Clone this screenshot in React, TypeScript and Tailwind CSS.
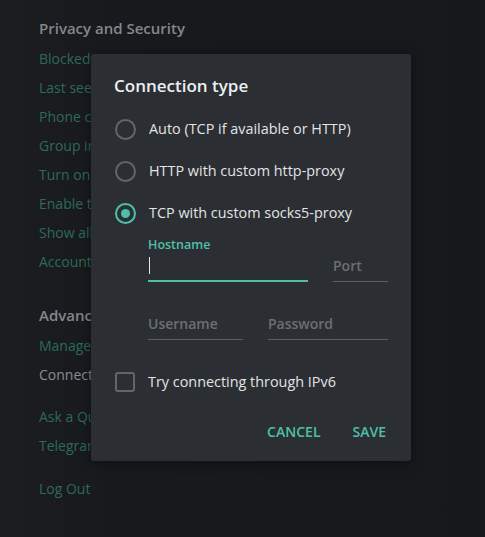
import React from 'react';

const privacyItems = [
  'Blocked users',
  'Last seen & online',
  'Phone calls',
  'Group invite settings',
  'Turn on local passcode',
  'Enable two-step verification',
  'Show all sessions',
  'Account self-destruct settings',
];

const Radio: React.FC<{ checked?: boolean; label: string }> = ({ checked, label }) => (
  <div className="flex h-[42px] items-center">
    <div className="flex w-[34px] shrink-0">
      <span
        className={`flex h-[21px] w-[21px] items-center justify-center rounded-full border-2 ${
          checked ? 'border-[#4fc0a8]' : 'border-[#62656a]'
        }`}
      >
        {checked && <span className="h-[9px] w-[9px] rounded-full bg-[#4fc0a8]" />}
      </span>
    </div>
    <span className="text-[14.4px] text-[#e2e4e6]">{label}</span>
  </div>
);

const Field: React.FC<{ placeholder: string; width: string }> = ({ placeholder, width }) => (
  <div className={`${width} border-b border-[#5b5e63] pb-[5px] text-[14px] font-semibold text-[#6c6f74]`}>
    {placeholder}
  </div>
);

export default function App() {
  return (
    <div
      className="relative h-[537px] w-[485px] overflow-hidden bg-[linear-gradient(90deg,#1b1d21_0%,#17191d_25%,#16181c_100%)]"
      style={{ fontFamily: '"Open Sans", "Liberation Sans", sans-serif' }}
    >
      {/* settings page behind the overlay */}
      <div className="pl-[39px] pt-[17px]">
        <div className="text-[15px] font-semibold leading-[22px] text-[#84878b]">Privacy and Security</div>
        <div className="mt-[5px]">
          {privacyItems.map((item) => (
            <div key={item} className="text-[14px] leading-[29px] text-[#2d6a59]">
              {item}
            </div>
          ))}
        </div>
        <div className="mt-[28px] text-[15px] font-semibold leading-[22px] text-[#84878b]">Advanced</div>
        <div className="mt-[5px] text-[14px] leading-[29px] text-[#2d6a59]">Manage local storage</div>
        <div className="text-[14px] leading-[29px] text-[#8a8c90]">Connection type</div>
        <div className="mt-[13px] text-[14px] leading-[29px] text-[#2d6a59]">Ask a Question</div>
        <div className="text-[14px] leading-[29px] text-[#2d6a59]">Telegram FAQ</div>
        <div className="mt-[14px] text-[14px] leading-[29px] text-[#2d6a59]">Log Out</div>
      </div>

      {/* dialog */}
      <div className="absolute left-[91px] top-[54px] flex h-[407px] w-[320px] flex-col rounded-[3px] bg-[#2b2e33] px-[23px] pt-5 shadow-[0_2px_12px_rgba(0,0,0,0.45)]">
        <div className="text-[17px] font-semibold leading-6 text-[#eceef0]">Connection type</div>
        <div className="mt-[10px] pl-px">
          <Radio label="Auto (TCP if available or HTTP)" />
          <Radio label="HTTP with custom http-proxy" />
          <Radio checked label="TCP with custom socks5-proxy" />
        </div>

        <div className="mt-[3px] pl-[34px]">
          <div className="text-[12.5px] font-semibold leading-4 text-[#4fc0a8]">Hostname</div>
          <div className="flex items-end gap-[25px]">
            <div className="flex h-[29px] w-[160px] items-center border-b-2 border-[#4fc0a8] pb-[2px]">
              <span className="ml-px h-[17px] w-px bg-[#e8e8e8]" />
            </div>
            <Field placeholder="Port" width="w-[55px]" />
          </div>
          <div className="mt-[31px] flex gap-[25px]">
            <Field placeholder="Username" width="w-[95px]" />
            <Field placeholder="Password" width="w-[120px]" />
          </div>
        </div>

        <div className="mt-[31px] flex items-center pl-px">
          <div className="w-[33px] shrink-0">
            <span className="block h-5 w-5 rounded-[3px] border-2 border-[#62656a]" />
          </div>
          <span className="text-[14.4px] text-[#e2e4e6]">Try connecting through IPv6</span>
        </div>

        <div className="mt-auto mb-[12px] flex justify-end gap-[32px] pr-[2px]">
          <button className="h-9 text-[14px] font-semibold text-[#4fc0a8]">CANCEL</button>
          <button className="h-9 text-[14px] font-semibold text-[#4fc0a8]">SAVE</button>
        </div>
      </div>
    </div>
  );
}
